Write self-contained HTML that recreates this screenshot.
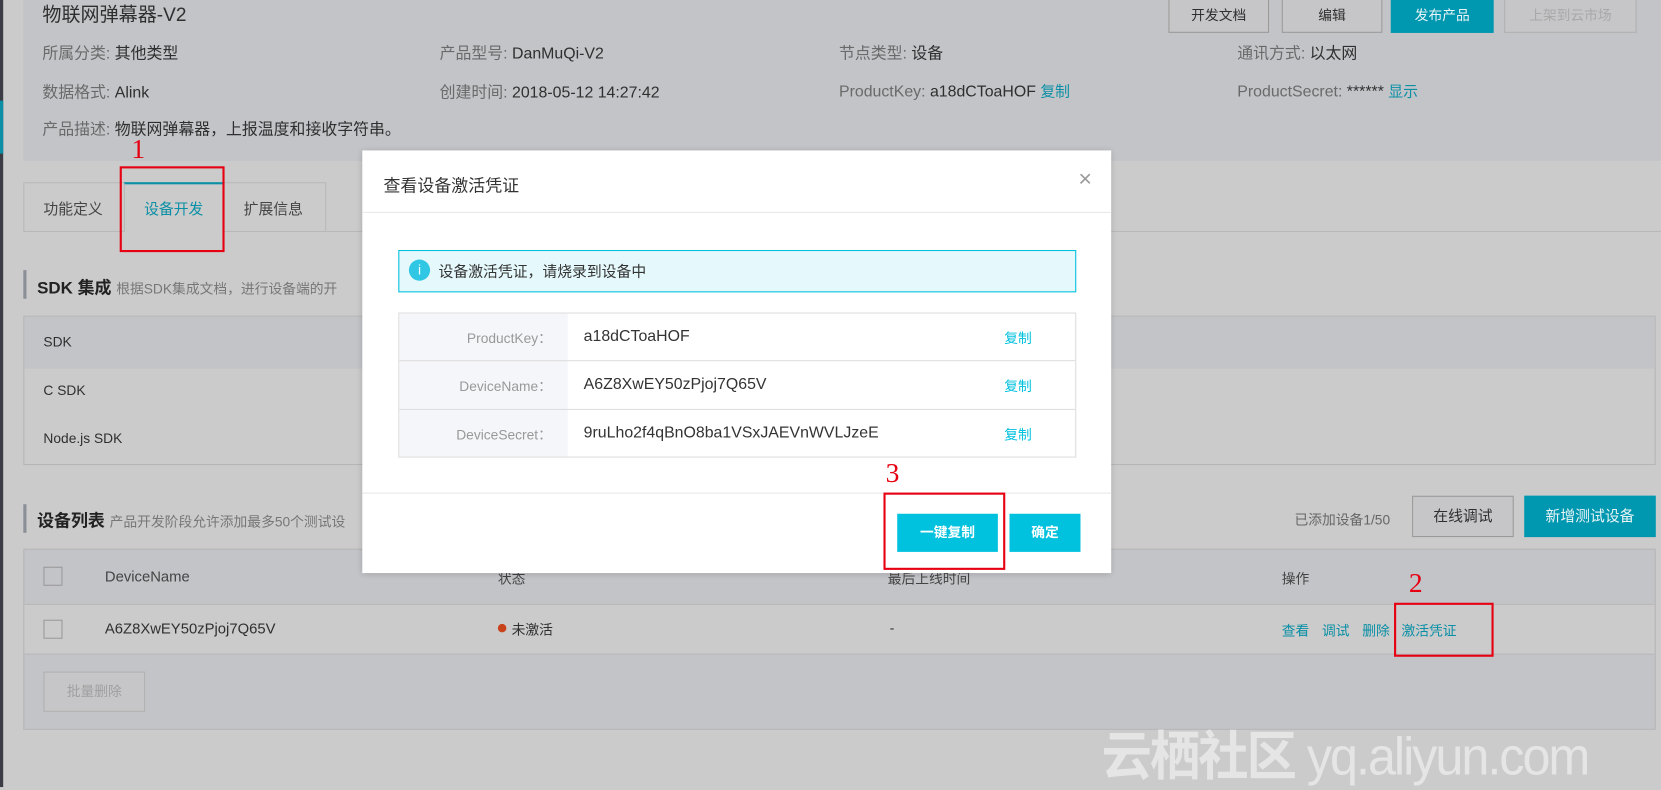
<!DOCTYPE html>
<html><head><meta charset="utf-8"><style>
*{margin:0;padding:0;box-sizing:border-box}
html,body{width:1661px;height:787px;overflow:hidden;background:#cbcbcb;font-family:"Liberation Sans","Noto Sans CJK SC",sans-serif}
#w{position:absolute;left:0;top:0;width:1568px;height:743px;transform:scale(1.0593);transform-origin:0 0;background:#cbcbcb;color:#2f2f2f}
.a{position:absolute;white-space:nowrap}
.lbl{color:#6a6a6a}
.btn{position:absolute;border:1px solid #9a9a9a;text-align:center;font-size:13px;color:#2f2f2f;background:#c6c6c8}
.red{position:absolute;border:2px solid #e60012}
.rn{position:absolute;color:#e60012;font-family:"Liberation Serif",serif;font-size:26px}
.lk{color:#0a8fa6}
</style></head><body><div id="w">
<div class="a" style="left:0;top:0;width:3px;height:743px;background:#3a3d44"></div>
<div class="a" style="left:0;top:95px;width:3px;height:50px;background:#0a8fa6"></div>
<div class="a" style="left:22px;top:0;width:1546px;height:152px;background:#c3c4c8"></div>
<div class="a" style="left:40px;top:0px;font-size:18px">物联网弹幕器-V2</div>
<div class="a" style="left:40px;top:39px;font-size:15px"><span class="lbl">所属分类:</span> 其他类型</div>
<div class="a" style="left:415px;top:39px;font-size:15px"><span class="lbl">产品型号:</span> DanMuQi-V2</div>
<div class="a" style="left:792px;top:39px;font-size:15px"><span class="lbl">节点类型:</span> 设备</div>
<div class="a" style="left:1168px;top:39px;font-size:15px"><span class="lbl">通讯方式:</span> 以太网</div>
<div class="a" style="left:40px;top:76px;font-size:15px"><span class="lbl">数据格式:</span> Alink</div>
<div class="a" style="left:415px;top:76px;font-size:15px"><span class="lbl">创建时间:</span> 2018-05-12 14:27:42</div>
<div class="a" style="left:792px;top:76px;font-size:15px"><span class="lbl">ProductKey:</span> a18dCToaHOF <span class="lk" style="font-size:14px">复制</span></div>
<div class="a" style="left:1168px;top:76px;font-size:15px"><span class="lbl">ProductSecret:</span> ****** <span class="lk" style="font-size:14px">显示</span></div>
<div class="a" style="left:40px;top:111px;font-size:15px"><span class="lbl">产品描述:</span> 物联网弹幕器，上报温度和接收字符串。</div>
<div class="btn" style="left:1103px;top:-1px;width:95px;height:32px;line-height:30px">开发文档</div>
<div class="btn" style="left:1210px;top:-1px;width:95px;height:32px;line-height:30px">编辑</div>
<div class="btn" style="left:1313px;top:-1px;width:97px;height:32px;line-height:30px;background:#0097b0;border-color:#0097b0;color:#e8f4f6">发布产品</div>
<div class="btn" style="left:1420px;top:-1px;width:125px;height:32px;line-height:30px;color:#a8a8a8;border-color:#b0b0b0">上架到云市场</div>
<div class="a" style="left:22px;top:218px;width:1546px;height:1px;background:#b8b8b8"></div>
<div class="a" style="left:22px;top:172px;width:286px;height:47px;border:1px solid #b8b8b8;background:#cbcbcb"></div>
<div class="a" style="left:117px;top:172px;width:94px;height:47px;border-top:2px solid #0a8fa6;border-left:1px solid #b8b8b8;border-right:1px solid #b8b8b8;background:#cbcbcb"></div>
<div class="a" style="left:41px;top:187px;font-size:14px;color:#444">功能定义</div>
<div class="a" style="left:136px;top:187px;font-size:14px;color:#0a8fa6">设备开发</div>
<div class="a" style="left:230px;top:187px;font-size:14px;color:#444">扩展信息</div>
<div class="red" style="left:113px;top:157px;width:99px;height:81px"></div>
<div class="rn" style="left:124px;top:126px">1</div>
<div class="a" style="left:22px;top:255px;width:3px;height:27px;background:#8a8f98"></div>
<div class="a" style="left:35px;top:258px;font-size:16px;font-weight:bold;color:#222">SDK 集成 <span style="font-size:13px;font-weight:normal;color:#777">根据SDK集成文档，进行设备端的开</span></div>
<div class="a" style="left:22px;top:298px;width:1541px;height:141px;border:1px solid #b5b5b5"></div>
<div class="a" style="left:23px;top:299px;width:1539px;height:49px;background:#c3c4c8"></div>
<div class="a" style="left:41px;top:315px;font-size:13px">SDK</div>
<div class="a" style="left:41px;top:361px;font-size:13px">C SDK</div>
<div class="a" style="left:41px;top:406px;font-size:13px">Node.js SDK</div>
<div class="a" style="left:22px;top:476px;width:3px;height:27px;background:#8a8f98"></div>
<div class="a" style="left:35px;top:478px;font-size:16px;font-weight:bold;color:#222">设备列表 <span style="font-size:13px;font-weight:normal;color:#777">产品开发阶段允许添加最多50个测试设</span></div>
<div class="a" style="left:1222px;top:480px;font-size:13px;color:#666">已添加设备1/50</div>
<div class="btn" style="left:1333px;top:468px;width:96px;height:39px;line-height:37px;font-size:14px">在线调试</div>
<div class="btn" style="left:1439px;top:468px;width:124px;height:39px;line-height:37px;font-size:14px;background:#0097b0;border-color:#0097b0;color:#e8f4f6">新增测试设备</div>
<div class="a" style="left:22px;top:518px;width:1541px;height:171px;border:1px solid #b5b5b5;background:#c3c4c8"></div>
<div class="a" style="left:23px;top:570px;width:1539px;height:48px;background:#cbcbcb;border-top:1px solid #b8b8b8;border-bottom:1px solid #b8b8b8"></div>
<div class="a" style="left:41px;top:535px;width:18px;height:18px;border:1px solid #9a9a9a"></div>
<div class="a" style="left:41px;top:585px;width:18px;height:18px;border:1px solid #9a9a9a"></div>
<div class="a" style="left:99px;top:536px;font-size:14px;color:#444">DeviceName</div>
<div class="a" style="left:470px;top:536px;font-size:13px;color:#444">状态</div>
<div class="a" style="left:838px;top:536px;font-size:13px;color:#444">最后上线时间</div>
<div class="a" style="left:1210px;top:536px;font-size:13px;color:#444">操作</div>
<div class="a" style="left:99px;top:585px;font-size:14px">A6Z8XwEY50zPjoj7Q65V</div>
<div class="a" style="left:470px;top:589px;width:8px;height:8px;border-radius:50%;background:#c8431c"></div>
<div class="a" style="left:483px;top:584px;font-size:13px">未激活</div>
<div class="a" style="left:840px;top:585px;font-size:13px">-</div>
<div class="a lk" style="left:1210px;top:585px;font-size:13px">查看</div>
<div class="a lk" style="left:1248px;top:585px;font-size:13px">调试</div>
<div class="a lk" style="left:1286px;top:585px;font-size:13px">删除</div>
<div class="a lk" style="left:1323px;top:585px;font-size:13px">激活凭证</div>
<div class="btn" style="left:41px;top:634px;width:96px;height:38px;line-height:36px;font-size:13px;color:#a0a0a0;border-color:#b0b0b0">批量删除</div>
<div class="red" style="left:1316px;top:569px;width:94px;height:51px"></div>
<div class="rn" style="left:1330px;top:536px">2</div>
<div class="a" style="left:1040px;top:674px;font-size:50px;color:rgba(255,255,255,0.5);font-weight:bold;letter-spacing:-2px;transform:scaleX(.95);transform-origin:0 0">云栖社区 <span style="font-weight:normal">yq.aliyun.com</span></div>
<div class="a" style="left:342px;top:142px;width:707px;height:399px;background:#fff;box-shadow:0 1px 6px rgba(0,0,0,.2)"></div>
<div class="a" style="left:362px;top:162px;font-size:16px;color:#333">查看设备激活凭证</div>
<div class="a" style="left:1018px;top:156px;font-size:22px;color:#999;font-weight:200">×</div>
<div class="a" style="left:342px;top:200px;width:707px;height:1px;background:#e8e8e8"></div>
<div class="a" style="left:376px;top:236px;width:640px;height:40px;background:#e5f8fb;border:1px solid #00c1de"></div>
<div class="a" style="left:386px;top:245px;width:20px;height:20px;border-radius:50%;background:#2fc7e3;color:#fff;font-size:13px;text-align:center;line-height:20px">i</div>
<div class="a" style="left:414px;top:246px;font-size:14px;color:#333">设备激活凭证，请烧录到设备中</div>
<div class="a" style="left:376px;top:295px;width:640px;height:137px;border:1px solid #ddd"></div>
<div class="a" style="left:377px;top:296px;width:159px;height:135px;background:#f5f6fa"></div>
<div class="a" style="left:377px;top:340px;width:638px;height:1px;background:#ddd"></div>
<div class="a" style="left:377px;top:386px;width:638px;height:1px;background:#ddd"></div>
<div class="a" style="left:376px;top:309px;width:145px;text-align:right;font-size:13px;color:#999">ProductKey：</div>
<div class="a" style="left:376px;top:354px;width:145px;text-align:right;font-size:13px;color:#999">DeviceName：</div>
<div class="a" style="left:376px;top:400px;width:145px;text-align:right;font-size:13px;color:#999">DeviceSecret：</div>
<div class="a" style="left:551px;top:309px;font-size:15px;color:#333">a18dCToaHOF</div>
<div class="a" style="left:551px;top:354px;font-size:15px;color:#333">A6Z8XwEY50zPjoj7Q65V</div>
<div class="a" style="left:551px;top:400px;font-size:15px;color:#333">9ruLho2f4qBnO8ba1VSxJAEVnWVLJzeE</div>
<div class="a" style="left:948px;top:309px;font-size:13px;color:#00c1de">复制</div>
<div class="a" style="left:948px;top:354px;font-size:13px;color:#00c1de">复制</div>
<div class="a" style="left:948px;top:400px;font-size:13px;color:#00c1de">复制</div>
<div class="a" style="left:342px;top:465px;width:707px;height:1px;background:#e8e8e8"></div>
<div class="a" style="left:847px;top:485px;width:95px;height:36px;background:#00c1de;color:#fff;font-size:13px;font-weight:bold;text-align:center;line-height:36px">一键复制</div>
<div class="a" style="left:953px;top:485px;width:67px;height:36px;background:#00c1de;color:#fff;font-size:13px;font-weight:bold;text-align:center;line-height:36px">确定</div>
<div class="red" style="left:834px;top:465px;width:115px;height:73px"></div>
<div class="rn" style="left:836px;top:432px">3</div>
</div></body></html>
